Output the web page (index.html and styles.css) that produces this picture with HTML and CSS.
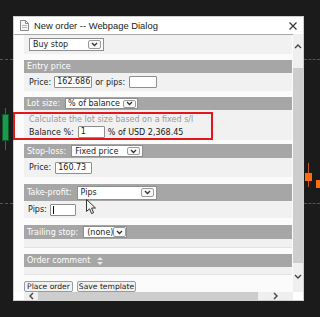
FILE: index.html
```html
<!DOCTYPE html>
<html>
<head>
	<meta charset="UTF-8">
	<title>New order</title>
	<link rel="stylesheet" href="styles.css">
</head>
<body>
	<div id="screen">
		<!--chart behind the dialog-->
		<div class="dash dash-tl"></div>
		<div class="dash dash-tr"></div>
		<div class="dash dash-bl"></div>
		<div class="dash dash-br"></div>
		<div class="wick wick-green"></div>
		<div class="candle candle-green"></div>
		<div class="wick wick-orange"></div>
		<div class="candle candle-orange"></div>
		<div class="candle candle-orange2"></div>

		<div id="dialog">
			<div class="titlebar">
				<svg class="doc" width="9" height="11" viewBox="0 0 9 11">
					<path d="M0.5 0.5H5.5L8.5 3.5V10.5H0.5Z" fill="#f6f6f6" stroke="#8a8a8a"/>
					<path d="M5.5 0.5V3.5H8.5" fill="none" stroke="#8a8a8a"/>
					<path d="M2 5.5H7M2 7.5H7" stroke="#b5b5b5"/>
				</svg>
				<span class="title">New order -- Webpage Dialog</span>
				<svg class="close" width="8" height="8" viewBox="0 0 8 8">
					<path d="M0.5 0.5L7.5 7.5M7.5 0.5L0.5 7.5" stroke="#333" stroke-width="1.2"/>
				</svg>
			</div>

			<div class="main">
				<div class="content">
					<div class="sec0">
						<div class="sel sel-buy"><span class="txt">Buy stop</span><span class="arr"><svg width="7" height="5" viewBox="0 0 7 5"><path d="M1 1L3.5 3.5L6 1" fill="none" stroke="#333" stroke-width="1.3"/></svg></span></div>
					</div>

					<div class="sec">
						<div class="head head-13">Entry price</div>
						<div class="row row-18">
							<span>Price:</span>
							<span class="inp inp-price">162.686</span>
							<span>or pips:</span>
							<span class="inp inp-pips"></span>
						</div>
					</div>

					<div class="sec sec-lot">
						<div class="head head-13">
							<span>Lot size:</span>
							<div class="sel sel-lot"><span class="txt">% of balance</span><span class="arr"><svg width="7" height="5" viewBox="0 0 7 5"><path d="M1 1L3.5 3.5L6 1" fill="none" stroke="#333" stroke-width="1.3"/></svg></span></div>
						</div>
						<div class="lotbody">
							<div class="hint">Calculate the lot size based on a fixed s/l</div>
							<div class="lotrow">
								<span>Balance %:</span>
								<span class="inp inp-bal">1</span>
								<span>% of USD 2,368.45</span>
							</div>
						</div>
					</div>

					<div class="sec sec-stop">
						<div class="head head-14">
							<span>Stop-loss:</span>
							<div class="sel sel-stop"><span class="txt">Fixed price</span><span class="arr"><svg width="7" height="5" viewBox="0 0 7 5"><path d="M1 1L3.5 3.5L6 1" fill="none" stroke="#333" stroke-width="1.3"/></svg></span></div>
						</div>
						<div class="row row-19">
							<span>Price:</span>
							<span class="inp inp-sl">160.73</span>
						</div>
					</div>

					<div class="sec sec-take">
						<div class="head head-17">
							<span>Take-profit:</span>
							<div class="sel sel-take"><span class="txt">Pips</span><span class="arr"><svg width="7" height="5" viewBox="0 0 7 5"><path d="M1 1L3.5 3.5L6 1" fill="none" stroke="#333" stroke-width="1.3"/></svg></span></div>
						</div>
						<div class="row row-17">
							<span>Pips:</span>
							<span class="inp inp-tp"><i class="caret"></i></span>
						</div>
					</div>

					<div class="sec">
						<div class="head head-14">
							<span>Trailing stop:</span>
							<div class="sel sel-trail"><span class="txt">(none)</span><span class="arr"><svg width="7" height="5" viewBox="0 0 7 5"><path d="M1 1L3.5 3.5L6 1" fill="none" stroke="#333" stroke-width="1.3"/></svg></span></div>
						</div>
						<div class="emptybody emptybody-9"></div>
					</div>

					<div class="sec sec-last">
						<div class="head head-13">
							<span>Order comment</span>
							<svg class="sort" width="6" height="8" viewBox="0 0 6 8"><path d="M3 0L6 3H0Z M3 8L6 5H0Z" fill="#e8e8e8"/></svg>
						</div>
						<div class="emptybody emptybody-8"></div>
					</div>

					<div class="buttons">
						<span class="btn btn-place">Place order</span>
						<span class="btn btn-save">Save template</span>
					</div>
				</div>

				<!--vertical scrollbar-->
				<div class="vscroll">
					<div class="vbtn-up"><svg width="8" height="5" viewBox="0 0 8 5"><path d="M1 4L4 1L7 4" fill="none" stroke="#444" stroke-width="1.4"/></svg></div>
					<div class="vtrack"></div>
					<div class="vthumb"></div>
					<div class="vbtn-down"><svg width="8" height="5" viewBox="0 0 8 5"><path d="M1 1L4 4L7 1" fill="none" stroke="#444" stroke-width="1.4"/></svg></div>
				</div>
			</div>

			<!--horizontal scrollbar-->
			<div class="hscroll">
				<div class="hbtn-left"><svg width="5" height="8" viewBox="0 0 5 8"><path d="M4 1L1 4L4 7" fill="none" stroke="#444" stroke-width="1.4"/></svg></div>
				<div class="hthumb"></div>
				<div class="hbtn-right"><svg width="5" height="8" viewBox="0 0 5 8"><path d="M1 1L4 4L1 7" fill="none" stroke="#444" stroke-width="1.4"/></svg></div>
				<div class="corner"></div>
			</div>

			<!--red annotation-->
			<div class="mark"></div>
		</div>

		<svg class="pointer" width="11" height="16" viewBox="0 0 11 16">
			<path d="M0.5 0.5V12.5L3.5 9.8L5.6 14.6L7.6 13.7L5.6 9H9.5Z" fill="#f4f4f4" stroke="#333" stroke-width="1"/>
		</svg>
	</div>
</body>
</html>
```

FILE: styles.css
```css
* {
	margin: 0;
	padding: 0;
	box-sizing: border-box;
}

body {
	background-color: #1b1b1b;
	font-family: "DejaVu Sans", Verdana, sans-serif;
	font-size: 8px;
	color: #222;
}

#screen {
	width: 320px;
	height: 317px;
	position: relative;
	overflow: hidden;
	padding: 16px 0 0 13px;
	background-color: #1b1b1b;
}

/* chart bits behind the window */
.dash {
	position: absolute;
	height: 0;
	border-top: 1px dashed #555;
}

.dash-tl {
	left: 0;
	top: 59px;
	width: 13px;
}

.dash-tr {
	left: 304px;
	top: 59px;
	width: 16px;
}

.dash-bl {
	left: 0;
	top: 203px;
	width: 13px;
}

.dash-br {
	left: 304px;
	top: 203px;
	width: 16px;
}

.wick {
	position: absolute;
	width: 1px;
}

.wick-green {
	left: 5px;
	top: 108px;
	height: 42px;
	background-color: #1f7a3c;
}

.wick-orange {
	left: 308px;
	top: 163px;
	height: 24px;
	background-color: #c2561a;
}

.candle {
	position: absolute;
}

.candle-green {
	left: 2px;
	top: 114px;
	width: 7px;
	height: 27px;
	background-color: #1b9a4c;
	border: 1px solid #0d5a2a;
}

.candle-orange {
	left: 305px;
	top: 173px;
	width: 7px;
	height: 8px;
	background-color: #ff6d12;
}

.candle-orange2 {
	left: 316px;
	top: 180px;
	width: 6px;
	height: 8px;
	background-color: #ff6d12;
}

/* dialog window */
#dialog {
	width: 291px;
	height: 285px;
	background-color: #fff;
	border: 1px solid #cfcfcf;
	display: flex;
	flex-direction: column;
	position: relative;
}

.titlebar {
	height: 17px;
	display: flex;
	align-items: center;
	padding-left: 6px;
	background-color: #fff;
}

.doc {
	flex: none;
}

.title {
	margin-left: 5px;
	font-family: "Liberation Sans", Arial, sans-serif;
	font-size: 9.4px;
	color: #1a1a1a;
}

.close {
	margin-left: auto;
	margin-right: 6px;
}

.main {
	height: 258px;
	display: flex;
}

.content {
	flex: 1;
	border-top: 1px solid #a9a9a9;
	padding: 0 1px 0 10px;
	background-color: #fbfbfb;
	overflow: hidden;
}

.sec0 {
	height: 19px;
	padding: 3px 5px;
	background-color: #f1f1f1;
	margin-bottom: 6px;
}

.sec {
	margin-bottom: 6px;
}

.sec-lot {
	margin-bottom: 4px;
}

.sec-stop,
.sec-take {
	margin-bottom: 7px;
}

.sec-last {
	margin-bottom: 6px;
}

.head {
	background-color: #a6a6a6;
	color: #fff;
	display: flex;
	align-items: center;
	gap: 4px;
	padding-left: 3px;
	white-space: nowrap;
}

.head-13 {
	height: 13px;
}

.head-14 {
	height: 14px;
}

.head-17 {
	height: 17px;
}

.row {
	background-color: #f1f1f1;
	display: flex;
	align-items: center;
	gap: 3px;
	padding-left: 5px;
	white-space: nowrap;
}

.row-17 {
	height: 17px;
	padding-left: 4px;
}

.row-18 {
	height: 18px;
}

.row-19 {
	height: 19px;
}

.lotbody {
	height: 30px;
	background-color: #f1f1f1;
	padding: 5px 5px 0;
	white-space: nowrap;
}

.hint {
	color: #9a9a9a;
	line-height: 9px;
}

.lotrow {
	margin-top: 2px;
	display: flex;
	align-items: center;
	gap: 3px;
	color: #1a1a1a;
}

.emptybody {
	background-color: #f1f1f1;
	border-bottom: 1px solid #e4e4e4;
}

.emptybody-9 {
	height: 9px;
}

.emptybody-8 {
	height: 8px;
}

/* inputs and selects */
.inp {
	display: inline-block;
	height: 12px;
	background-color: #fff;
	border: 1px solid #8e8e8e;
	border-radius: 1px;
	padding: 0 2px;
	line-height: 10px;
	color: #1a1a1a;
}

.inp-price {
	width: 38px;
}

.inp-pips {
	width: 28px;
	margin-left: 1px;
}

.inp-bal {
	width: 27px;
	margin-left: 1px;
}

.inp-sl {
	width: 37px;
	margin-left: 1px;
}

.inp-tp {
	width: 26px;
	position: relative;
}

.caret {
	position: absolute;
	left: 2px;
	top: 1px;
	width: 1px;
	height: 8px;
	background-color: #111;
}

.sel {
	display: flex;
	align-items: center;
	background-color: #fff;
	border: 1px solid #8e8e8e;
	padding-left: 3px;
	color: #1a1a1a;
}

.sel .txt {
	flex: 1;
	white-space: nowrap;
	overflow: hidden;
}

.arr {
	flex: none;
	width: 13px;
	height: 8px;
	margin-right: 2px;
	border: 1px solid #9a9a9a;
	border-radius: 2px;
	background-color: #f7f7f7;
	display: flex;
	align-items: center;
	justify-content: center;
}

.sel-buy {
	width: 75px;
	height: 13px;
}

.sel-buy .arr {
	height: 9px;
}

.sel-lot {
	width: 73px;
	height: 11px;
	margin-left: 1px;
	padding-left: 2px;
}

.sel-lot .arr {
	margin-right: 1px;
}

.sel-stop {
	width: 72px;
	height: 12px;
	margin-left: 1px;
}

.sel-take {
	width: 80px;
	height: 14px;
	margin-left: 1px;
}

.sel-take .arr {
	height: 9px;
}

.sel-trail {
	width: 44px;
	height: 12px;
	margin-left: 1px;
}

.sel-trail .arr {
	margin-right: 0;
	height: 10px;
}

.sort {
	margin-left: 3px;
}

.buttons {
	display: flex;
	gap: 4px;
}

.btn {
	height: 11px;
	border: 1px solid #9a9a9a;
	border-radius: 2px;
	background-color: #f2f2f2;
	line-height: 9px;
	font-size: 7.6px;
	text-align: center;
	color: #1a1a1a;
}

.btn-place {
	width: 49px;
}

.btn-save {
	width: 59px;
}

/* scrollbars */
.vscroll {
	width: 10px;
	display: flex;
	flex-direction: column;
	background-color: #efefef;
}

.vbtn-up {
	height: 24px;
	display: flex;
	align-items: center;
	justify-content: center;
	padding-top: 1px;
}

.vtrack {
	height: 10px;
}

.vthumb {
	height: 195px;
	background-color: #cdcdcd;
}

.vbtn-down {
	flex: 1;
	display: flex;
	align-items: center;
	justify-content: center;
	padding-bottom: 2px;
}

.hscroll {
	height: 8px;
	display: flex;
	padding-left: 10px;
	background-color: #fff;
}

.hbtn-left {
	width: 14px;
	background-color: #efefef;
	display: flex;
	align-items: center;
	justify-content: center;
}

.hthumb {
	width: 220px;
	background-color: #cdcdcd;
}

.hbtn-right {
	flex: 1;
	background-color: #efefef;
	display: flex;
	align-items: center;
	justify-content: center;
}

.corner {
	width: 10px;
	background-color: #fff;
}

/* red marker drawn over the lot size block */
.mark {
	position: absolute;
	left: -1px;
	top: 95px;
	width: 200px;
	height: 28px;
	border: 2px solid #e3161b;
}

.pointer {
	position: absolute;
	left: 86px;
	top: 199px;
}
```
